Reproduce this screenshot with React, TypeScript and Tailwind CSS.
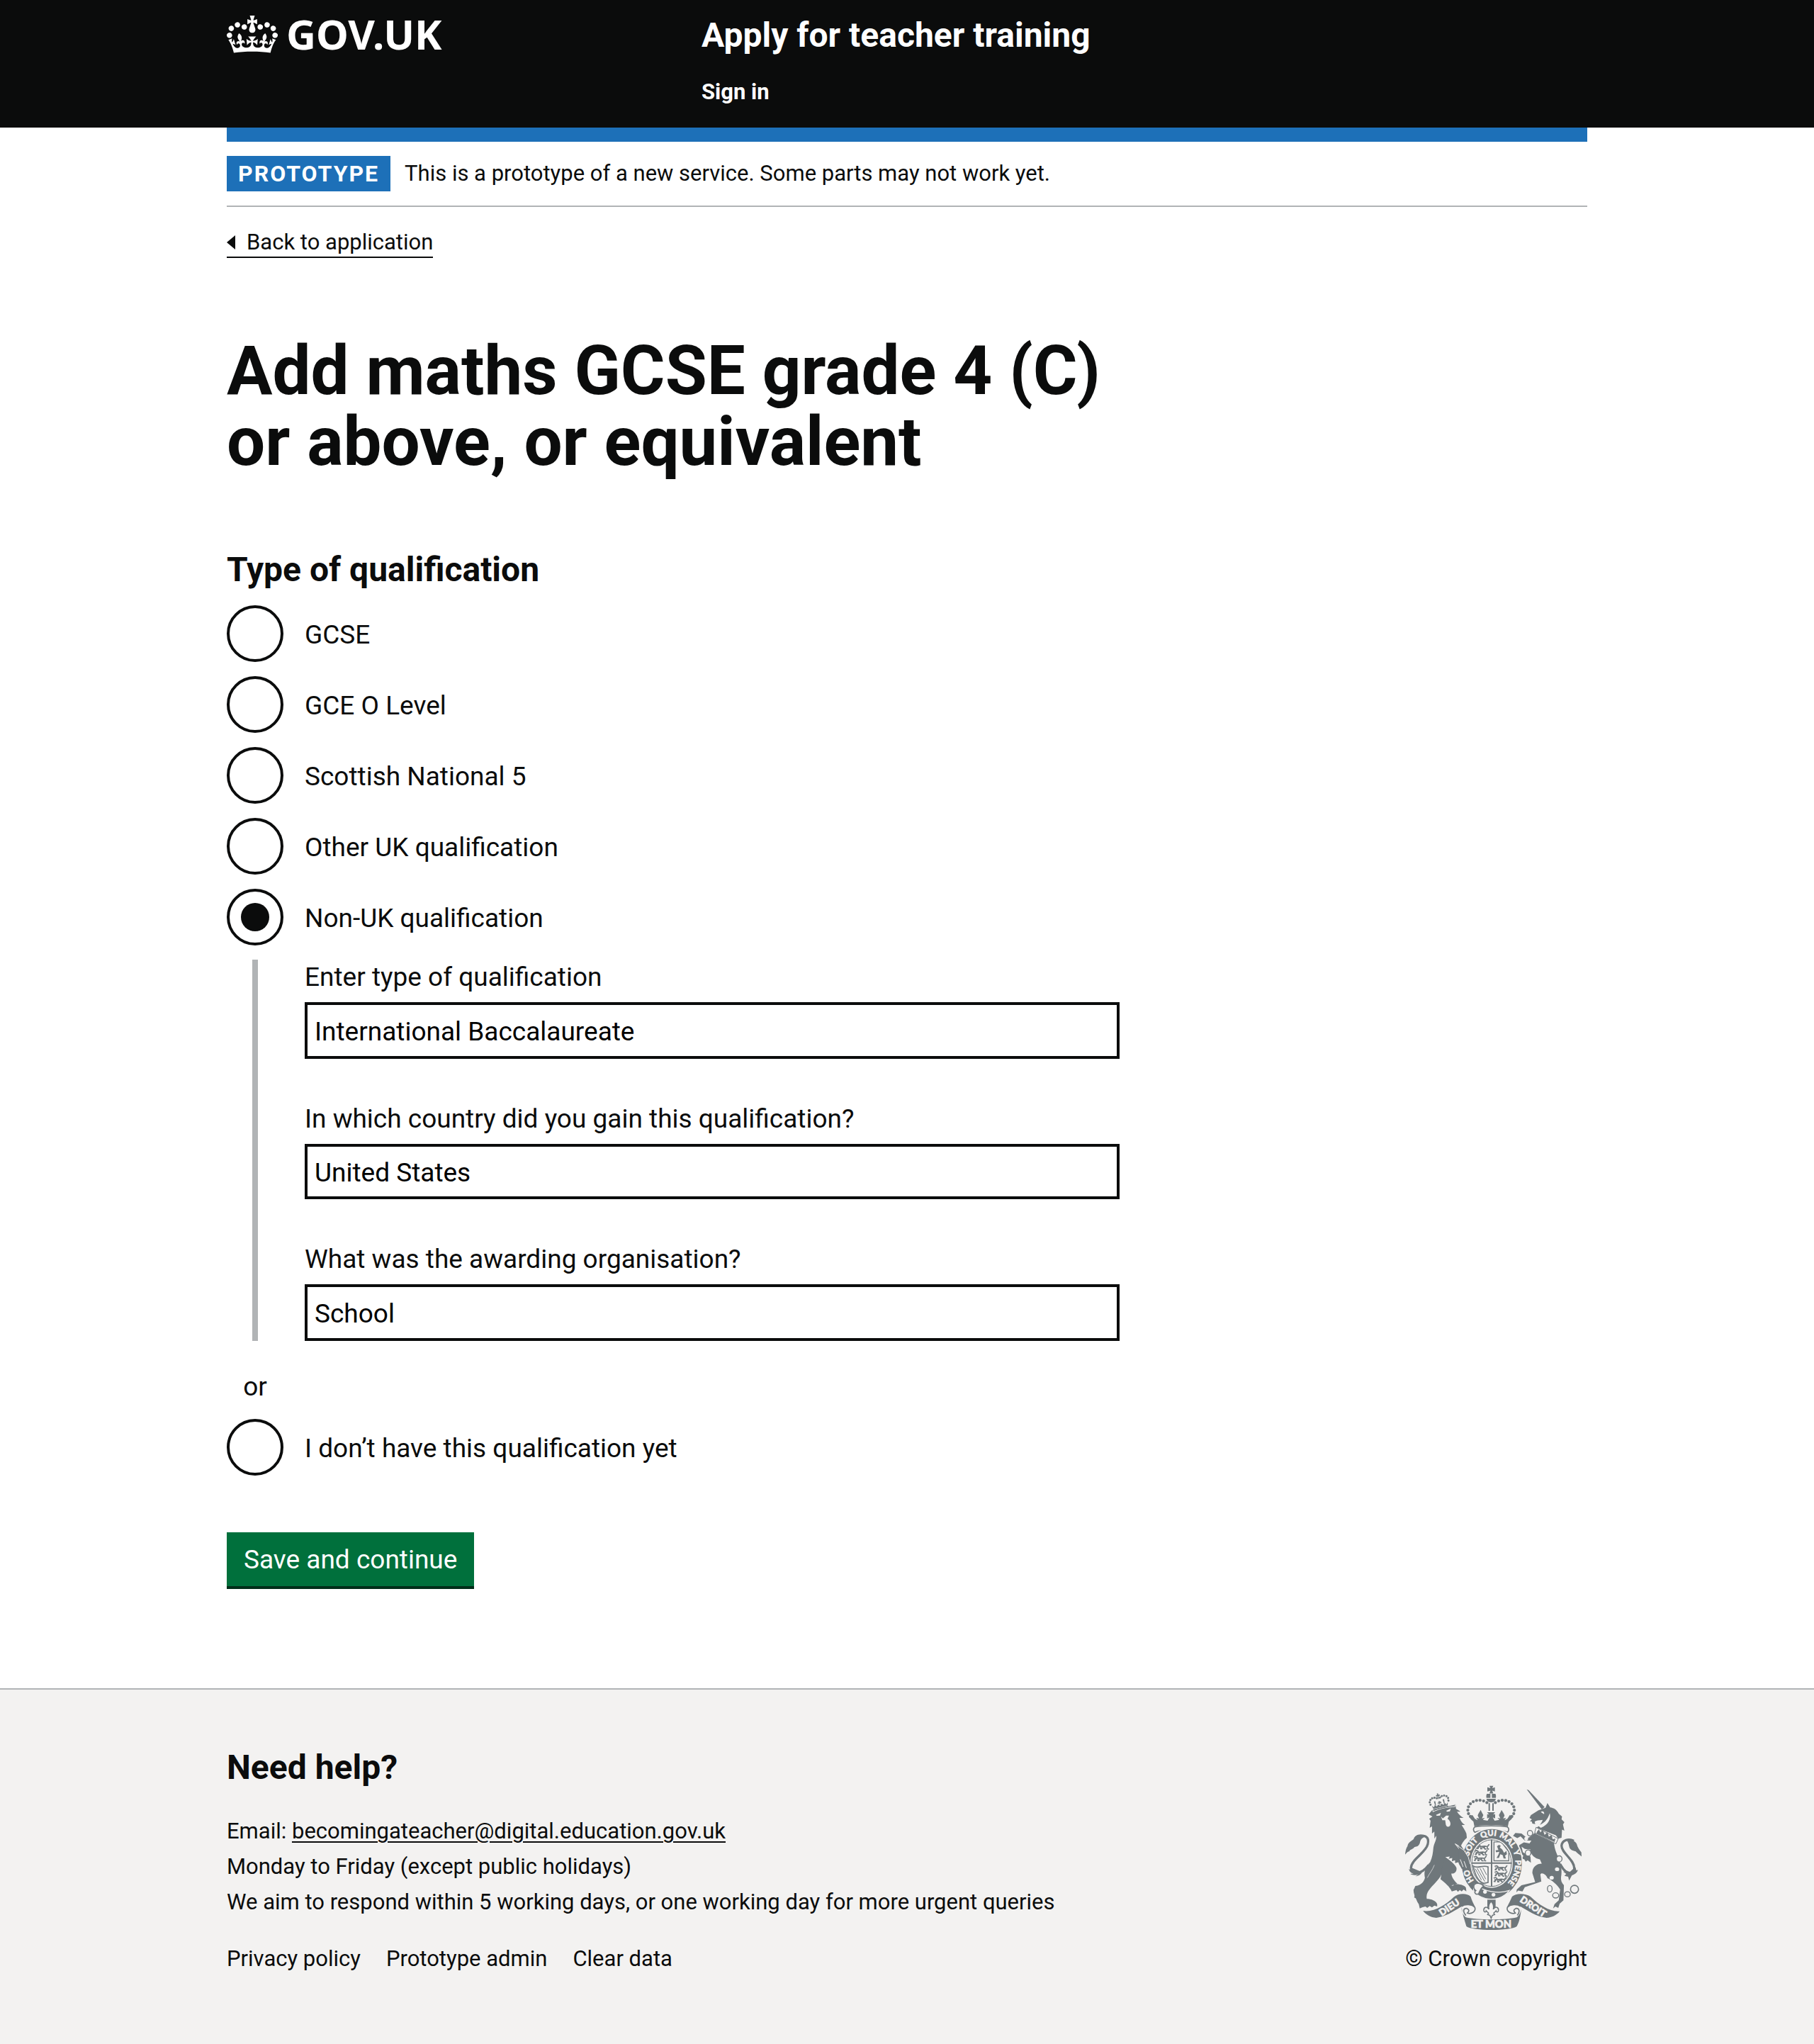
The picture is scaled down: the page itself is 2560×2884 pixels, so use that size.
import React, { useState } from 'react';

const INK = '#6f777b';
const PAPER = '#f3f2f1';

function Crown() {
  return (
    <svg viewBox="0 0 132 97" className="h-[53px] w-[72px] shrink-0" fill="currentColor" fillRule="evenodd" aria-hidden="true">
      <path d="M25 30.2c3.5 1.5 7.7-.2 9.1-3.7 1.5-3.6-.2-7.8-3.9-9.2-3.6-1.4-7.6.3-9.1 3.9-1.4 3.5.3 7.5 3.9 9zM9 39.5c3.6 1.5 7.8-.2 9.2-3.7 1.5-3.6-.2-7.8-3.9-9.1-3.6-1.5-7.6.2-9.1 3.8-1.4 3.5.3 7.5 3.8 9zM4.4 57.2c3.5 1.5 7.7-.2 9.1-3.8 1.5-3.6-.2-7.7-3.9-9.1-3.5-1.5-7.6.3-9.1 3.8-1.4 3.5.3 7.6 3.9 9.1zm38.3-21.4c3.5 1.5 7.7-.2 9.1-3.8 1.5-3.6-.2-7.7-3.9-9.1-3.6-1.5-7.6.3-9.1 3.8-1.3 3.6.4 7.7 3.9 9.1zm64.4-5.6c-3.6 1.5-7.8-.2-9.1-3.7-1.5-3.6.2-7.8 3.8-9.2 3.6-1.4 7.7.3 9.2 3.9 1.3 3.5-.4 7.5-3.9 9zm15.9 9.3c-3.6 1.5-7.7-.2-9.1-3.7-1.5-3.6.2-7.8 3.7-9.1 3.6-1.5 7.7.2 9.2 3.8 1.5 3.5-.3 7.5-3.8 9zm4.7 17.7c-3.6 1.5-7.8-.2-9.2-3.8-1.5-3.6.2-7.7 3.9-9.1 3.6-1.5 7.7.3 9.2 3.8 1.3 3.5-.4 7.6-3.9 9.1zM89.3 35.8c-3.6 1.5-7.8-.2-9.2-3.8-1.4-3.6.2-7.7 3.9-9.1 3.6-1.5 7.7.3 9.2 3.8 1.4 3.6-.3 7.7-3.9 9.1zM69.7 17.7l8.9 4.7V9.3l-8.9 2.8c-.2-.3-.5-.6-.9-.9L72.4 0H59.6l3.5 11.2c-.3.3-.6.5-.9.9l-8.8-2.8v13.1l8.8-4.7c.3.3.6.7.9.9l-5 15.4v.1c-.2.8-.4 1.6-.4 2.4 0 4.1 3.1 7.5 7 8.1h.2c.3 0 .7.1 1 .1.4 0 .7 0 1-.1h.2c4-.6 7.1-4.1 7.1-8.1 0-.8-.1-1.7-.4-2.4V34l-5.1-15.4c.4-.2.7-.6 1-.9zM66 92.8c16.9 0 32.8 1.1 47.1 3.2 4-16.9 8.9-26.7 14-33.5l-9.6-3.4c1 4.9 1.1 7.2 0 10.2-1.5-1.4-3-4.3-4.2-8.7L108.6 76c2.8-2 5-3.2 7.5-3.3-4.4 9.4-10 11.9-13.6 11.2-4.3-.8-6.3-4.6-5.6-7.9 1-4.7 5.7-5.9 8-.5 4.3-8.7-3-11.4-7.6-8.8 7.1-7.2 7.9-13.5 2.1-21.1-8 6.1-8.1 12.3-4.5 20.8-4.7-5.4-12.1-2.5-9.5 6.2 3.4-5.2 7.9-2 7.2 3.1-.6 4.3-6.4 7.8-13.5 7.2-10.3-.9-10.9-8-11.2-13.8 2.5-.5 7.1 1.8 11 7.3L80.2 60c-4.1 4.4-8 5.3-12.3 5.4 1.4-4.4 8-11.6 8-11.6H55.5s6.4 7.2 7.9 11.6c-4.2-.1-8-1-12.3-5.4l1.4 16.4c3.9-5.5 8.5-7.7 10.9-7.3-.3 5.8-.9 12.8-11.1 13.8-7.2.6-12.9-2.9-13.5-7.2-.7-5 3.8-8.3 7.1-3.1 2.7-8.7-4.6-11.6-9.4-6.2 3.7-8.5 3.6-14.7-4.6-20.8-5.8 7.6-5 13.9 2.2 21.1-4.7-2.6-11.9.1-7.7 8.8 2.3-5.5 7.1-4.2 8.1.5.7 3.3-1.3 7.1-5.7 7.9-3.5.7-9-1.8-13.5-11.2 2.5.1 4.7 1.3 7.5 3.3l-4.7-15.4c-1.2 4.4-2.7 7.2-4.3 8.7-1.1-3-.9-5.3 0-10.2l-9.5 3.4c5 6.9 9.9 16.7 14 33.5 14.8-2.1 30.8-3.2 47.7-3.2z" />
    </svg>
  );
}

/* A lion passant, about 62 by 22 units, used in the quarters of the shield. */
function Passant({ x, y }: { x: number; y: number }) {
  return (
    <path
      transform={`translate(${x} ${y})`}
      fill="none"
      stroke={INK}
      strokeWidth="5"
      strokeLinejoin="round"
      d="M2 4l8-3 6 4-3 6-8-1M12 8l10 1 14-1 10 2M12 12l-8 6h6M20 10l-1 9h7M36 10l-3 5 4 5h6M46 10l2 10h6M46 9c8-1 2-8 10-8M24 13l8 1"
    />
  );
}

const crownBeads: [number, number][] = [
  [419, 131], [405, 124], [390, 121], [375, 122], [361, 127], [349, 136], [341, 149], [338, 163], [341, 178], [349, 190],
];

function RoyalArms() {
  return (
    <svg viewBox="72 58 752 616" className="h-[205px] w-[250px]" fill={INK} aria-hidden="true">
      <defs>
        <path id="garter-line" d="M440 502A100 115 0 0 1 440 272A100 115 0 0 1 440 502" />
        <clipPath id="shield-clip">
          <ellipse cx="439" cy="388" rx="86" ry="100" />
        </clipPath>
      </defs>

      {/* Lion: tail, body, legs */}
      <path d="M126 284C150 262 176 274 168 308C160 344 98 372 97 408C98 440 142 436 172 396" fill="none" stroke={INK} strokeWidth="10" />
      <path d="M152 268C128 262 112 272 108 286C98 294 84 300 82 316C76 324 74 334 72 352C80 342 84 338 90 338C92 330 104 330 110 322C112 316 124 322 132 308C138 300 132 288 152 278Z" />
      <path d="M92 404C96 414 100 422 88 412C90 424 96 430 108 432L94 434C104 440 118 440 128 436L116 444C130 442 140 436 144 426Z" />
      <path d="M172 181L186 164L286 138L288 158C298 164 304 166 306 170L292 170C300 182 308 190 320 196L303 196C308 210 316 220 326 226L312 226C318 238 326 246 332 262L334 280C322 290 312 304 306 322L330 352L346 382L350 404L336 402L340 414L328 408L326 418L316 406C308 402 302 396 298 384L284 388L284 376L270 380L272 366L256 370L262 360L242 362C238 384 232 404 230 424C232 444 244 464 264 478C272 486 276 486 280 478C300 474 326 482 330 492L332 508L320 500L312 508L304 502L296 510L290 502L270 508C262 488 240 470 222 456L226 436C216 458 192 478 178 496C168 508 160 522 164 540C182 540 204 548 208 562L208 572L196 568L186 576L176 570L166 578L158 572L144 576L134 580L130 562C118 548 122 536 110 534C116 524 106 516 108 500C116 490 110 484 122 484C142 478 152 466 156 450C150 426 158 404 178 384C188 364 190 344 192 322C196 300 206 290 204 272L196 284L196 254L186 262L186 232L176 238L180 208L174 200L188 190Z" />
      <path d="M240 360C262 376 284 392 290 408C292 424 282 434 268 432C270 450 282 464 294 476L262 484C246 470 226 450 226 420Z" />
      <path d="M284 306L298 314L322 330L338 350L350 384L336 370L320 356L300 326Z" stroke={PAPER} strokeWidth="3" />
      <path d="M190 160L286 138L284 148C250 150 218 156 190 170Z" stroke={PAPER} strokeWidth="3" />
      <path d="M203 183L224 174L220 186L206 187ZM246 166L266 156L262 168L250 170ZM224 190L232 198L246 186L258 186L252 200C262 206 268 220 262 230C254 238 244 232 244 220L242 206L230 206Z" fill={PAPER} />
      <path d="M166 450C176 430 188 418 196 396" stroke={PAPER} strokeWidth="2" fill="none" />

      {/* Lion's crown */}
      <g transform="rotate(-13 214 128)">
        <path d="M182 138L186 152H248L252 138L244 146L238 136L232 146L224 138L217 146L210 138L202 146L196 136L190 146ZM213 126L221 126L219 140H215ZM209 130H225V135H209ZM195 122L201 122L200 140H196ZM233 122L239 122L238 140H234Z" />
        <path d="M184 154H250V158H184Z" />
        {[[178, 132], [177, 121], [182, 112], [191, 107], [201, 107], [210, 111], [224, 111], [233, 107], [243, 107], [252, 112], [257, 121], [256, 132]].map(([x, y]) => (
          <circle key={x} cx={x} cy={y} r="4.5" />
        ))}
        <path d="M214 92L220 92L219 98H225V104H219V116H215V104H209V98H215Z" />
      </g>

      {/* Royal crown */}
      <path d="M430 60H446L442 70L453 66V84L442 80L446 92H430L434 80L421 84V66L434 70Z" />
      <path d="M434 94H419C416 98 416 104 417 111H434ZM440 94H455C458 98 458 104 457 111H440ZM417 115H457C455 124 448 130 437 130C426 130 419 124 417 115Z" />
      <path d="M426 134H432V166H426ZM442 134H448V166H442Z" />
      {crownBeads.map(([x, y]) => (
        <React.Fragment key={x * 1000 + y}>
          <circle cx={x} cy={y} r="6.4" />
          <circle cx={874 - x} cy={y} r="6.4" />
        </React.Fragment>
      ))}
      <path d="M420 172H454L446 182L454 180V198L444 194L452 208L472 204L464 196L476 198L470 184C474 176 478 170 481 162C486 170 492 178 494 186L488 198L500 196L494 206L506 200L516 184L530 190C526 200 520 204 512 212L508 232C490 228 460 226 437 226C414 226 384 228 366 232L362 212C354 204 348 200 344 190L358 184L368 200L380 206L374 196L386 198L380 186C382 178 388 170 393 162C396 170 400 176 404 184L398 198L410 196L402 204L422 208L430 194L420 198V180L428 182Z" />
      <path d="M368 234C400 228 474 228 506 234C514 240 514 250 506 257C474 244 400 244 368 257C360 250 360 240 368 234Z" fill={PAPER} stroke={INK} strokeWidth="5" />

      {/* Unicorn: tail and body */}
      <path d="M788 294C766 282 738 290 736 314C736 346 790 372 790 410C790 432 768 434 752 422C740 412 736 402 730 392" fill="none" stroke={INK} strokeWidth="10" />
      <path d="M756 288C774 286 794 292 800 306C804 322 812 332 820 342L821 360C812 350 802 346 796 338C782 334 770 330 768 316C766 304 762 296 756 288Z" />
      <path d="M794 404C800 414 796 424 806 416C802 430 792 436 780 440L768 462L764 446L748 442L756 434L742 424L766 430Z" />
      <path d="M588 75L596 78L664 150L652 160Z" />
      <path d="M600 196L606 184L638 164L668 153L676 133L688 152C704 154 716 162 724 178L738 190L736 202L748 214L742 224L748 250L738 246L736 280L722 284L712 270L630 238C642 228 650 220 656 204C640 206 628 206 622 212L624 222L612 220L610 212L602 210L610 202Z" />
      <path d="M648 170C656 166 664 170 662 180L652 174ZM634 228C660 222 676 206 686 176C692 200 680 226 648 238Z" fill={PAPER} />
      <path d="M628 236L722 284L712 306L622 258Z" fill={PAPER} stroke={INK} strokeWidth="3" />
      <path d="M632 254L640 244L646 258L656 246L664 268L676 256L682 276L694 268L698 286L710 284L706 298L630 262Z" />
      <path d="M620 260L704 302C706 330 716 348 728 378C736 400 738 428 734 446C732 460 736 472 746 482L744 546L728 560L722 578L710 572L700 580L706 562L724 546L730 500C716 478 696 462 676 452C672 436 650 424 646 436L650 466L580 490L570 508L552 504L544 512L546 500L566 482L624 468L612 430C612 404 630 390 652 390L644 372C622 368 606 352 606 338L596 344L604 330L580 328L566 318L572 342L604 360L606 386L592 376L584 382L578 372L566 368L574 358L552 330L556 312L576 300L600 304L608 292L580 292L562 274L548 282L530 272L540 260L566 262L590 282C604 278 610 270 620 260Z" />
      <g fill={PAPER}>
        <ellipse cx="717" cy="414" rx="9" ry="8" />
        <ellipse cx="694" cy="450" rx="9" ry="8" />
        <circle cx="586" cy="284" r="8" />
      </g>
      <g fill={PAPER} stroke={INK} strokeWidth="4">
        <ellipse cx="602" cy="261" rx="11" ry="12" />
        <ellipse cx="594" cy="345" rx="12" ry="13" />
        <ellipse cx="726" cy="370" rx="12" ry="13" />
        <ellipse cx="686" cy="497" rx="10" ry="14" />
        <ellipse cx="711" cy="525" rx="13" ry="11" />
        <ellipse cx="761" cy="520" rx="12" ry="11" />
        <circle cx="791" cy="499" r="17" strokeWidth="5" />
      </g>

      {/* Garter and shield */}
      <ellipse cx="440" cy="390" rx="130" ry="149" stroke={PAPER} strokeWidth="5" />
      <ellipse cx="439" cy="388" rx="90" ry="105" fill={PAPER} />
      <ellipse cx="439" cy="388" rx="84" ry="99" fill="none" stroke={INK} strokeWidth="3" />
      <g fill={PAPER} stroke={PAPER} strokeWidth="1.5" fontFamily="Lato, sans-serif" fontWeight="900" fontSize="34" textAnchor="middle">
        <text><textPath href="#garter-line" startOffset="17%">HO</textPath></text>
        <text><textPath href="#garter-line" startOffset="35%">SOIT</textPath></text>
        <text><textPath href="#garter-line" startOffset="48%">QUI</textPath></text>
        <text><textPath href="#garter-line" startOffset="60%">MAL</textPath></text>
        <text><textPath href="#garter-line" startOffset="69%">Y</textPath></text>
        <text><textPath href="#garter-line" startOffset="81%">PENSE</textPath></text>
      </g>
      <g clipPath="url(#shield-clip)">
        <Passant x={374} y={308} />
        <Passant x={366} y={333} />
        <Passant x={362} y={358} />
        <Passant x={450} y={398} />
        <Passant x={450} y={423} />
        <Passant x={446} y={448} />
        <path d="M436 286H442V492H436ZM352 385H528V391H352Z" />
        <path d="M449 298H480L512 340V378H449Z" fill="none" stroke={INK} strokeWidth="4" />
        <path d="M462 316L470 310L478 314L474 322L484 330L492 344L502 336L504 350L496 356L500 368H490L486 354L476 350L470 366H460L468 352L472 340L458 342L456 334L468 332Z" />
        <path d="M361 400C380 414 400 394 424 404V470L406 474C384 466 368 436 361 400Z" fill="none" stroke={INK} strokeWidth="5" />
        <path d="M378 410L410 466M390 410L414 456M402 408L418 438M370 412L396 460" stroke={INK} strokeWidth="3" />
        <path d="M396 486H480V500H396Z" />
      </g>
      <path d="M300 300C312 320 332 340 346 384L350 414L334 414L330 420L312 412L300 390Z" />
      <path d="M286 308L322 334L340 362L348 392M306 372L318 404M322 380L332 408" fill="none" stroke={PAPER} strokeWidth="3" />
      <path d="M366 478C404 508 470 520 514 504C492 536 450 546 412 538C390 532 372 520 362 504Z" stroke={PAPER} strokeWidth="4" />
      <path d="M366 478C378 470 396 472 406 486C396 490 392 500 384 518C372 524 362 512 372 504C362 498 362 486 366 478Z" fill={PAPER} stroke={INK} strokeWidth="5" />
      <circle cx="411" cy="510" r="8" fill={PAPER} />
      <circle cx="447" cy="522" r="8" fill={PAPER} />

      {/* Fleur-de-lis */}
      <path d="M421 543H456V580H421Z" />
      <path d="M437 550C448 562 450 572 446 584C456 568 470 576 468 590C466 598 458 596 458 590L448 600L452 606L442 610L437 622L432 610L422 606L426 600L416 590C416 596 408 598 406 590C404 576 418 568 428 584C424 572 426 562 437 550Z" fill={PAPER} stroke={INK} strokeWidth="4.5" />

      {/* Motto scroll */}
      <path d="M148 590C190 598 244 566 278 532C300 514 336 516 350 530C354 544 362 560 370 576C352 562 326 562 312 572C286 586 246 616 204 620C180 618 160 606 148 590Z" />
      <path d="M728 592C690 596 640 566 604 530C580 514 540 516 526 530C520 544 512 560 504 576C524 562 548 562 562 572C590 588 630 616 672 620C696 618 716 608 728 592Z" />
      <path d="M312 572C326 560 356 562 368 576C374 594 352 606 336 600C344 592 346 586 334 580C318 578 316 594 330 610M562 572C548 560 518 562 506 576C500 594 524 606 540 600C532 592 530 586 542 580C558 578 560 594 548 610" fill={PAPER} stroke={INK} strokeWidth="5" />
      <path d="M312 574C310 590 318 610 330 618C376 630 500 630 546 618C558 610 566 590 564 574C566 600 556 640 546 656C520 676 356 676 332 656C324 630 314 600 312 574Z" />
      <g fill={PAPER} stroke={PAPER} strokeWidth="2" fontFamily="Lato, sans-serif" fontWeight="900" textAnchor="middle">
        <text x="437" y="662" fontSize="44">ET MON</text>
        <text transform="translate(267 587) rotate(-34)" fontSize="40">DIEU</text>
        <text transform="translate(608 584) rotate(34)" fontSize="40">DROIT</text>
      </g>
    </svg>
  );
}

type RadioProps = { id: string; label: string; value: string; onChange: (id: string) => void };

function Radio({ id, label, value, onChange }: RadioProps) {
  return (
    <div className="flex items-center">
      <input
        type="radio"
        id={id}
        name="qualification"
        checked={value === id}
        onChange={() => onChange(id)}
        className="size-20 shrink-0 appearance-none rounded-full border-4 border-[#0b0c0c] bg-white p-4 checked:bg-[#0b0c0c] checked:bg-clip-content"
      />
      <label htmlFor={id} className="pt-1 pl-[30px]">
        {label}
      </label>
    </div>
  );
}

const FIELD = 'mt-[10px] block w-full border-4 border-[#0b0c0c] bg-white px-[10px] pt-[2px] text-[37px] text-black outline-none';

function Field({ id, label, initial, short }: { id: string; label: string; initial: string; short?: boolean }) {
  return (
    <div>
      <label htmlFor={id} className="block">
        {label}
      </label>
      <input id={id} type="text" defaultValue={initial} className={`${FIELD} ${short ? 'h-[78px]' : 'h-20'}`} />
    </div>
  );
}

export default function App() {
  const [value, setValue] = useState('non-uk');
  return (
    <div className="flex min-h-screen flex-col bg-white font-['Roboto',sans-serif] text-[#0b0c0c]">
      <header className="bg-[#0b0c0c] px-8 text-white">
        <div className="mx-auto grid max-w-[1920px] grid-cols-[670px_1fr] pt-5 pb-[30px]">
          <a href="#" className="flex h-14 items-center gap-3 self-start font-['Noto_Sans',sans-serif] text-[58px] leading-[56px] font-bold">
            <Crown />
            <span>GOV.UK</span>
          </a>
          <div className="flex flex-col items-start gap-[30px]">
            <a href="#" className="text-[48px] leading-[60px] font-bold">
              Apply for teacher training
            </a>
            <a href="#" className="text-[31px] leading-10 font-bold">
              Sign in
            </a>
          </div>
        </div>
      </header>

      <div className="grow px-8">
        <div className="mx-auto max-w-[1920px] text-[31px] leading-10">
          <div className="h-5 bg-[#1d70b8]" />
          <div className="flex items-center gap-5 border-b-2 border-[#b1b4b6] py-5">
            <strong className="bg-[#1d70b8] px-4 text-[32px] leading-[50px] tracking-[2px] text-white">PROTOTYPE</strong>
            <span>This is a prototype of a new service. Some parts may not work yet.</span>
          </div>
          <a href="#" className="mt-[30px] inline-flex items-center gap-4 border-b-2 border-[#0b0c0c]">
            <svg viewBox="0 0 12 20" className="h-5 w-3" fill="currentColor" aria-hidden="true">
              <path d="M0 10L12 0V20Z" />
            </svg>
            Back to application
          </a>
        </div>

        <main className="mx-auto max-w-[1920px] pt-[109px] pb-[140px] text-[37px] leading-[50px]">
          <form className="max-w-[1260px]" onSubmit={(e) => e.preventDefault()}>
            <h1 className="text-[96px] leading-[100px] font-bold">Add maths GCSE grade 4 (C) or above, or equivalent</h1>
            <fieldset className="mt-[101px]">
              <legend className="mb-5 text-[48px] leading-[60px] font-bold">Type of qualification</legend>
              <div className="flex flex-col gap-5">
                <Radio id="gcse" label="GCSE" value={value} onChange={setValue} />
                <Radio id="o-level" label="GCE O Level" value={value} onChange={setValue} />
                <Radio id="scottish" label="Scottish National 5" value={value} onChange={setValue} />
                <Radio id="other-uk" label="Other UK qualification" value={value} onChange={setValue} />
                <Radio id="non-uk" label="Non-UK qualification" value={value} onChange={setValue} />
                <div className="ml-9 flex flex-col gap-[60px] border-l-8 border-[#b1b4b6] pl-[66px]">
                  <Field id="type" label="Enter type of qualification" initial="International Baccalaureate" />
                  <Field id="country" label="In which country did you gain this qualification?" initial="United States" short />
                  <Field id="organisation" label="What was the awarding organisation?" initial="School" />
                </div>
                <div className="mt-5 w-20 text-center">or</div>
                <Radio id="none" label="I don’t have this qualification yet" value={value} onChange={setValue} />
              </div>
            </fieldset>
            <button type="submit" className="mt-20 block h-[76px] bg-[#00703c] px-6 pt-[2px] text-white shadow-[0_4px_0_#002d18]">
              Save and continue
            </button>
          </form>
        </main>
      </div>

      <footer className="border-t-2 border-[#b1b4b6] bg-[#f3f2f1] px-8 pt-20 pb-[100px]">
        <div className="mx-auto flex max-w-[1920px] items-end justify-between text-[31px]">
          <div>
            <h2 className="text-[48px] leading-[60px] font-bold">Need help?</h2>
            <ul className="mt-[35px] leading-[50px]">
              <li>
                Email:{' '}
                <a href="mailto:becomingateacher@digital.education.gov.uk" className="underline decoration-2 underline-offset-4">
                  becomingateacher@digital.education.gov.uk
                </a>
              </li>
              <li>Monday to Friday (except public holidays)</li>
              <li>We aim to respond within 5 working days, or one working day for more urgent queries</li>
            </ul>
            <nav className="mt-[35px] flex gap-9 leading-10">
              <a href="#">Privacy policy</a>
              <a href="#">Prototype admin</a>
              <a href="#">Clear data</a>
            </nav>
          </div>
          <a href="#" className="flex flex-col items-start gap-5 leading-10">
            <RoyalArms />
            <span>© Crown copyright</span>
          </a>
        </div>
      </footer>
    </div>
  );
}
